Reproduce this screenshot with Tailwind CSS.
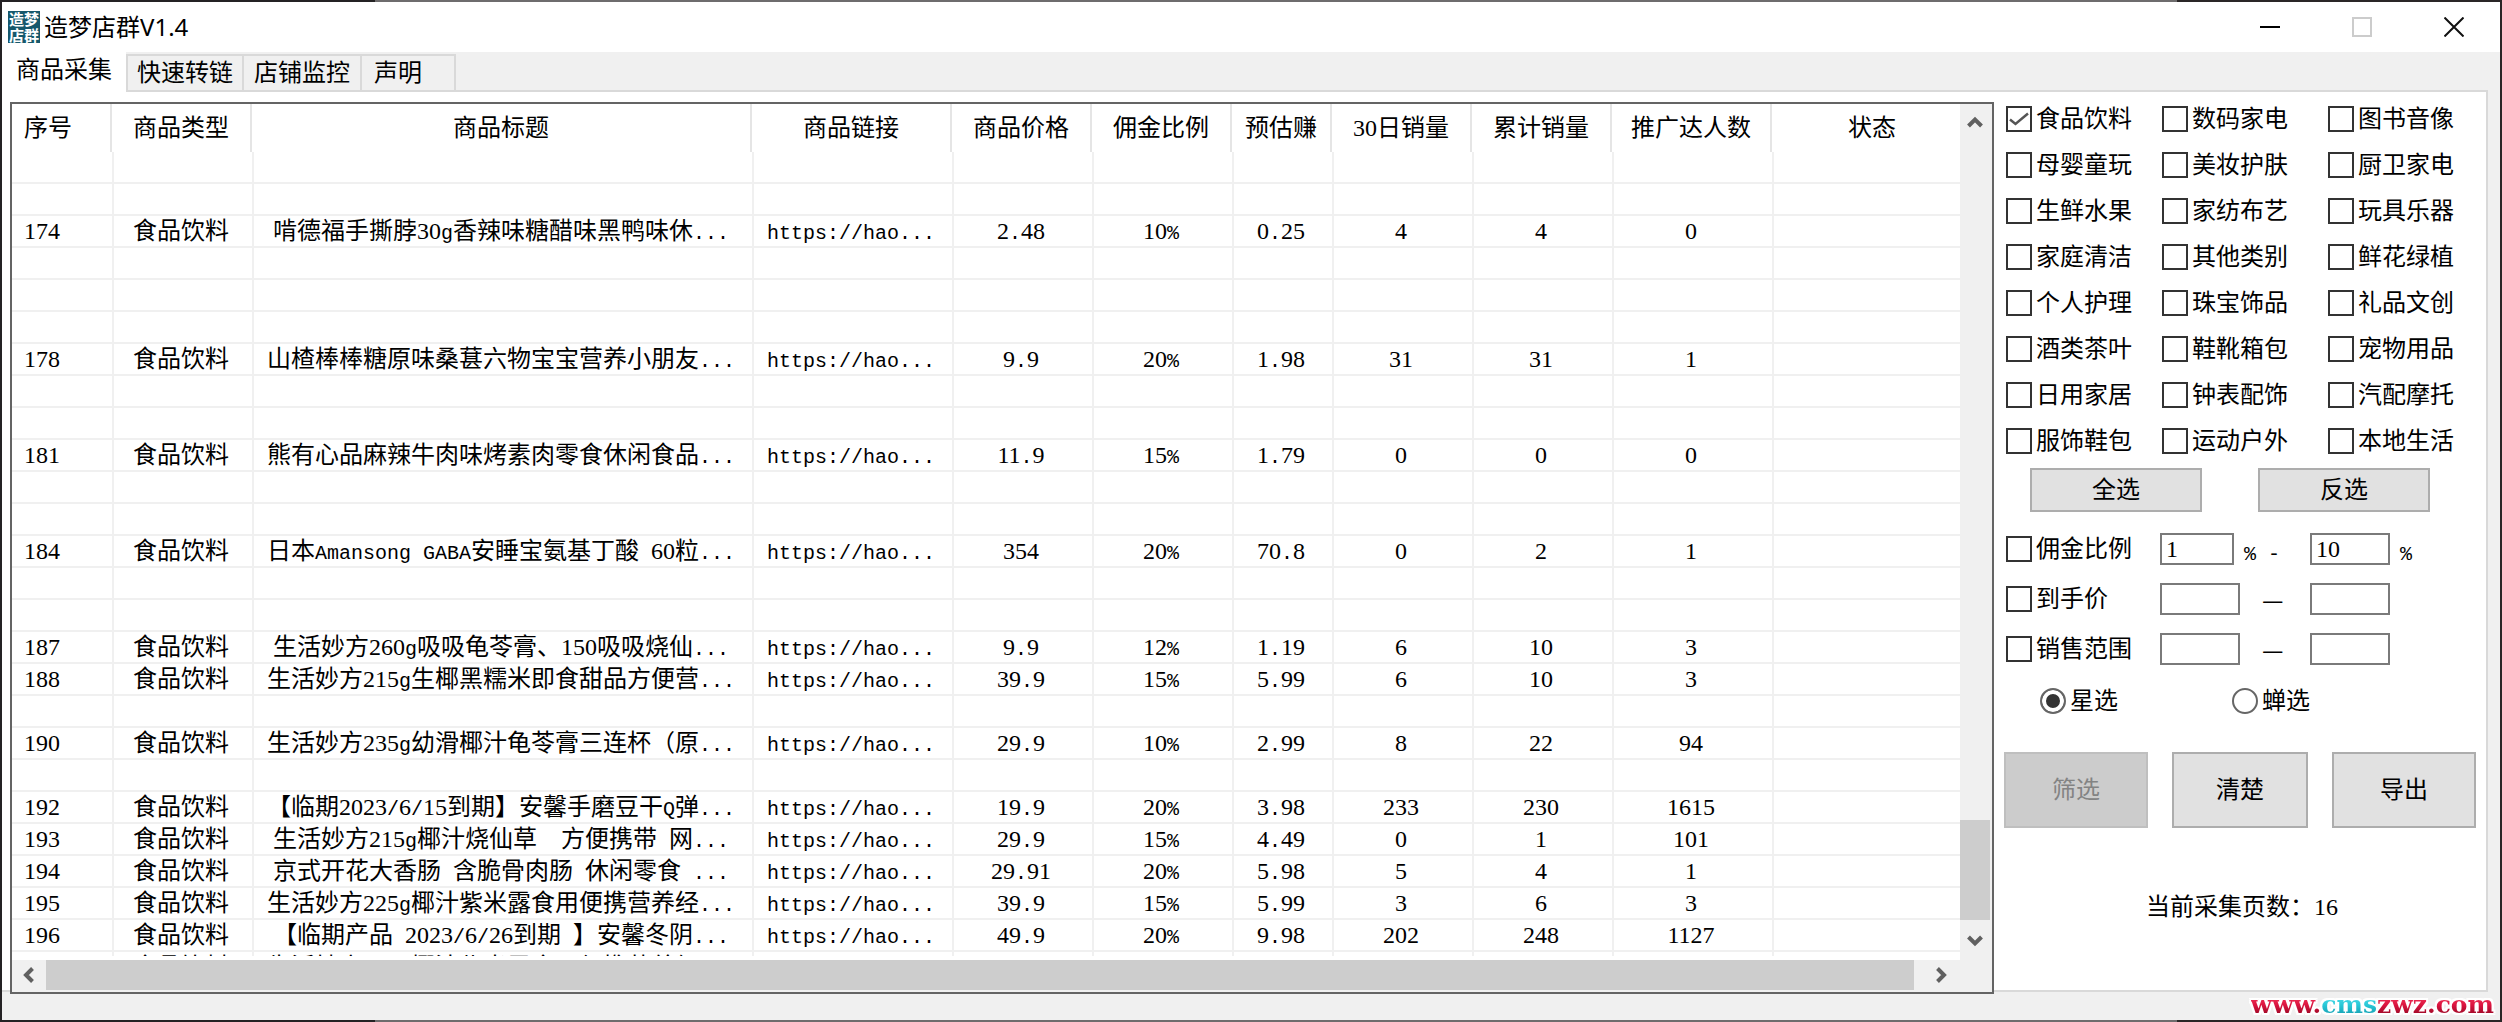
<!DOCTYPE html>
<html lang="zh-CN">

<head>
    <meta charset="UTF-8">
    <meta name="viewport" content="width=device-width, initial-scale=1.0">
    <title>造梦店群V1.4</title>
    <script src="https://cdn.jsdelivr.net/npm/@tailwindcss/browser@4"></script>
</head>

<body class="h-screen p-[2px] overflow-hidden bg-[linear-gradient(90deg,#242224_15%,#6e6c6d_15%,#6e6c6d_87%,#2a2627_87%)] font-['Liberation_Serif','Noto_Sans_CJK_SC',serif] text-2xl leading-[30px] text-black">
    <div class="h-full flex flex-col bg-[#f0f0f0]">
        <!-- Title bar -->
        <header class="flex items-center h-[50px] shrink-0 bg-white pl-[6px]">
            <div class="size-8 bg-[#16586c] text-white text-[15px] leading-4 font-bold text-center font-['Noto_Sans_CJK_SC',sans-serif]">造梦店群</div>
            <h1 class="ml-1 flex-1 font-['Noto_Sans','Noto_Sans_CJK_SC',sans-serif]">造梦店群V1.4</h1>
            <button aria-label="最小化" class="w-[92px] h-full flex items-center justify-center">
                <svg width="20" height="20" viewBox="0 0 20 20"><path d="M0 10H20" stroke="#000" stroke-width="2" /></svg>
            </button>
            <button aria-label="最大化" class="w-[92px] h-full flex items-center justify-center" disabled>
                <svg width="20" height="20" viewBox="0 0 20 20"><rect x="1" y="1" width="18" height="18" fill="none" stroke="#ccc" stroke-width="2" /></svg>
            </button>
            <button aria-label="关闭" class="w-[92px] h-full flex items-center justify-center">
                <svg width="20" height="20" viewBox="0 0 20 20"><path d="M0.5 0.5L19.5 19.5M19.5 0.5L0.5 19.5" stroke="#111" stroke-width="2" /></svg>
            </button>
        </header>

        <!-- Tabs -->
        <nav class="flex h-10 shrink-0">
            <button class="w-[124px] bg-white pb-1">商品采集</button>
            <div class="flex flex-1 border-b-2 border-[#d9d9d9] mr-3 pt-[2px]">
                <button class="w-[118px] border-2 border-b-0 border-[#d9d9d9]">快速转链</button>
                <button class="w-[118px] border-2 border-b-0 border-l-0 border-[#d9d9d9]">店铺监控</button>
                <button class="w-[94px] border-2 border-b-0 border-l-0 border-[#d9d9d9] text-left pl-3">声明</button>
            </div>
        </nav>

        <main class="flex flex-1 min-h-0 mr-3 mb-7 bg-white border-r-2 border-b-2 border-[#d9d9d9]">
            <!-- Goods list -->
            <section class="flex flex-col flex-1 min-w-0 mt-[10px] ml-2 -mb-1 border-2 border-[#646464] bg-white relative">
                <div class="flex flex-1 min-h-0">
                    <div class="flex-1 min-w-0 mb-1 overflow-hidden">
                        <table class="w-full table-fixed border-separate border-spacing-0 whitespace-nowrap text-center">
                            <colgroup>
                                <col class="w-[100px]">
                                <col class="w-[140px]">
                                <col class="w-[500px]">
                                <col class="w-[200px]">
                                <col class="w-[140px]">
                                <col class="w-[140px]">
                                <col class="w-[100px]">
                                <col class="w-[140px]">
                                <col class="w-[140px]">
                                <col class="w-[160px]">
                                <col>
                            </colgroup>
                            <thead>
                                <tr class="h-12 [&>th]:font-normal [&>th]:p-0 [&>th]:border-r-2 [&>th]:border-[#e5e5e5] [&>th:last-child]:border-r-0 [&>th:last-child]:pl-3">
                                    <th class="text-left"><span class="pl-3">序号</span></th>
                                    <th>商品类型</th>
                                    <th>商品标题</th>
                                    <th>商品链接</th>
                                    <th>商品价格</th>
                                    <th>佣金比例</th>
                                    <th>预估赚</th>
                                    <th>30日销量</th>
                                    <th>累计销量</th>
                                    <th>推广达人数</th>
                                    <th>状态</th>
                                </tr>
                            </thead>
                            <tbody id="goods"></tbody>
                        </table>
                    </div>
                    <div class="flex flex-col w-8 bg-[#f0f0f0] pr-[2px]">
                        <button aria-label="向上滚动" class="h-9 flex items-center justify-center">
                            <svg width="16" height="14" viewBox="0 0 16 14"><path d="M1.500 11L8 4.500L14.500 11" fill="none" stroke="#606060" stroke-width="4" /></svg>
                        </button>
                        <div class="flex-1"></div>
                        <div class="h-[100px] bg-[#cdcdcd]"></div>
                        <button aria-label="向下滚动" class="h-10 flex items-center justify-center">
                            <svg width="16" height="14" viewBox="0 0 16 14"><path d="M1.500 4L8 10.500L14.500 4" fill="none" stroke="#606060" stroke-width="4" /></svg>
                        </button>
                    </div>
                </div>
                <div class="flex h-8 shrink-0 bg-[#f0f0f0] pb-[2px] pr-8">
                    <button aria-label="向左滚动" class="w-[34px] flex items-center justify-center">
                        <svg width="14" height="16" viewBox="0 0 14 16"><path d="M10.500 1.500L4 8L10.500 14.500" fill="none" stroke="#606060" stroke-width="4" /></svg>
                    </button>
                    <div class="flex-1 bg-[#cdcdcd]"></div>
                    <button aria-label="向右滚动" class="w-[46px] flex items-center justify-center pl-2">
                        <svg width="14" height="16" viewBox="0 0 14 16"><path d="M3.500 1.500L10 8L3.500 14.500" fill="none" stroke="#606060" stroke-width="4" /></svg>
                    </button>
                </div>
            </section>

            <!-- Filters -->
            <aside class="w-[492px] shrink-0 pl-3 pt-1">
                <div id="categories" class="grid grid-cols-[156px_166px_1fr] auto-rows-[46px] items-center"></div>

                <div class="flex pl-6 pt-1 gap-14">
                    <button class="w-[172px] h-11 bg-[#e1e1e1] border-2 border-[#adadad]">全选</button>
                    <button class="w-[172px] h-11 bg-[#e1e1e1] border-2 border-[#adadad]">反选</button>
                </div>

                <div class="grid grid-cols-[154px_150px_1fr] auto-rows-[50px] items-center pt-3">
                    <label class="flex items-center gap-1"><input type="checkbox" class="appearance-none size-[26px] border-2 border-[#333]">佣金比例</label>
                    <div class="flex items-end">
                        <input type="text" value="1" aria-label="最低佣金比例" class="w-[74px] h-8 border-2 border-[#7a7a7a] pl-1 leading-none">
                        <span class="ml-[10px] font-['Liberation_Mono',monospace] text-xl leading-none whitespace-pre">% -</span>
                    </div>
                    <div class="flex items-end">
                        <input type="text" value="10" aria-label="最高佣金比例" class="w-20 h-8 border-2 border-[#7a7a7a] pl-1 leading-none">
                        <span class="ml-[10px] font-['Liberation_Mono',monospace] text-xl leading-none">%</span>
                    </div>

                    <label class="flex items-center gap-1"><input type="checkbox" class="appearance-none size-[26px] border-2 border-[#333]">到手价</label>
                    <div class="flex items-center">
                        <input type="text" aria-label="最低到手价" class="w-20 h-8 border-2 border-[#7a7a7a] pl-1">
                        <span class="ml-[22px] font-['Noto_Sans_CJK_SC',sans-serif]">—</span>
                    </div>
                    <input type="text" aria-label="最高到手价" class="w-20 h-8 border-2 border-[#7a7a7a] pl-1">

                    <label class="flex items-center gap-1"><input type="checkbox" class="appearance-none size-[26px] border-2 border-[#333]">销售范围</label>
                    <div class="flex items-center">
                        <input type="text" aria-label="最低销售" class="w-20 h-8 border-2 border-[#7a7a7a] pl-1">
                        <span class="ml-[22px] font-['Noto_Sans_CJK_SC',sans-serif]">—</span>
                    </div>
                    <input type="text" aria-label="最高销售" class="w-20 h-8 border-2 border-[#7a7a7a] pl-1">
                </div>

                <div class="grid grid-cols-[192px_1fr] pl-[34px] pt-3">
                    <label class="flex items-center gap-1"><input type="radio" name="source" checked class="appearance-none size-[26px] rounded-full border-2 border-[#666] checked:bg-[#333] shadow-[inset_0_0_0_4px_#fff]">星选</label>
                    <label class="flex items-center gap-1"><input type="radio" name="source" class="appearance-none size-[26px] rounded-full border-2 border-[#666]">蝉选</label>
                </div>

                <div class="flex justify-between h-[76px] mt-9 -ml-[2px] mr-[10px]">
                    <button disabled class="w-36 bg-[#ccc] border-2 border-[#bfbfbf] text-[#838383]">筛选</button>
                    <button class="w-[136px] bg-[#e1e1e1] border-2 border-[#adadad]">清楚</button>
                    <button class="w-36 bg-[#e1e1e1] border-2 border-[#adadad]">导出</button>
                </div>

                <p class="pl-[140px] pt-16">当前采集页数：16</p>
            </aside>
        </main>
    </div>

    <!-- Site mark -->
    <a href="#" class="absolute right-2 bottom-[2px] flex font-['DejaVu_Serif',serif] text-[25px] font-bold text-transparent [filter:drop-shadow(2px_0_#fff)_drop-shadow(-2px_0_#fff)_drop-shadow(0_2px_#fff)_drop-shadow(0_-2px_#fff)]">
        <span class="bg-clip-text bg-linear-to-b from-[#ff4068] via-[#dc1440] to-[#7a0418]">www.</span>
        <span class="bg-clip-text bg-linear-to-b from-[#5cecf4] via-[#28c8d8] to-[#0c8ca0]">cms</span>
        <span class="bg-clip-text bg-linear-to-b from-[#ff4068] via-[#dc1440] to-[#7a0418]">zwz.com</span>
    </a>

    <script>
        const categories = [
            '食品饮料', '数码家电', '图书音像',
            '母婴童玩', '美妆护肤', '厨卫家电',
            '生鲜水果', '家纺布艺', '玩具乐器',
            '家庭清洁', '其他类别', '鲜花绿植',
            '个人护理', '珠宝饰品', '礼品文创',
            '酒类茶叶', '鞋靴箱包', '宠物用品',
            '日用家居', '钟表配饰', '汽配摩托',
            '服饰鞋包', '运动户外', '本地生活'
        ];

        // title, price, rate, profit, 30-day sales, total sales, promoters
        const goods = {
            174: ['啃德福手撕脖30g香辣味糖醋味黑鸭味休...', '2.48', '10%', '0.25', '4', '4', '0'],
            178: ['山楂棒棒糖原味桑葚六物宝宝营养小朋友...', '9.9', '20%', '1.98', '31', '31', '1'],
            181: ['熊有心品麻辣牛肉味烤素肉零食休闲食品...', '11.9', '15%', '1.79', '0', '0', '0'],
            184: ['日本Amansong GABA安睡宝氨基丁酸 60粒...', '354', '20%', '70.8', '0', '2', '1'],
            187: ['生活妙方260g吸吸龟苓膏、150吸吸烧仙...', '9.9', '12%', '1.19', '6', '10', '3'],
            188: ['生活妙方215g生椰黑糯米即食甜品方便营...', '39.9', '15%', '5.99', '6', '10', '3'],
            190: ['生活妙方235g幼滑椰汁龟苓膏三连杯（原...', '29.9', '10%', '2.99', '8', '22', '94'],
            192: ['【临期2023/6/15到期】安馨手磨豆干Q弹...', '19.9', '20%', '3.98', '233', '230', '1615'],
            193: ['生活妙方215g椰汁烧仙草　方便携带 网...', '29.9', '15%', '4.49', '0', '1', '101'],
            194: ['京式开花大香肠 含脆骨肉肠 休闲零食 ...', '29.91', '20%', '5.98', '5', '4', '1'],
            195: ['生活妙方225g椰汁紫米露食用便携营养经...', '39.9', '15%', '5.99', '3', '6', '3'],
            196: ['【临期产品 2023/6/26到期 】安馨冬阴...', '49.9', '20%', '9.98', '202', '248', '1127'],
            197: ['生活妙方225g椰汁紫米露食用便携营养经...', '39.9', '15%', '5.99', '3', '6', '3']
        };

        // Latin letters and punctuation take half the width of a Chinese character
        function halfWidth(text) {
            return text.replace(/[\x20-\x2f\x3a-\x7e]+/g, run =>
                `<span class="font-['Liberation_Mono',monospace] text-xl leading-none whitespace-pre">${run}</span>`);
        }

        document.getElementById('categories').innerHTML = categories.map((name, i) => `
            <label class="flex items-center gap-1">
                <span class="grid">
                    <input type="checkbox" ${i === 0 ? 'checked' : ''} class="peer appearance-none size-[26px] border-2 border-[#333] col-start-1 row-start-1">
                    <svg class="hidden peer-checked:block col-start-1 row-start-1 pointer-events-none" width="26" height="26" viewBox="0 0 26 26"><path d="M4 13.500L9.500 18L22 7.500" fill="none" stroke="#555" stroke-width="2.500" /></svg>
                </span>${name}
            </label>`).join('');

        let rows = '';
        for (let no = 172; no <= 197; no++) {
            const item = goods[no];
            const cells = item
                ? [String(no), '食品饮料', item[0], 'https://hao...', ...item.slice(1), '']
                : Array(11).fill('');
            rows += `<tr class="h-8 [&>td]:p-0 [&>td]:pr-1 [&>td]:h-8 [&>td]:leading-[30px] [&>td]:border-b-2 [&>td]:border-l-2 [&>td]:border-[#f0f0f0] [&>td:first-child]:border-l-0 [&>td:first-child]:pl-3 [&>td:first-child]:text-left">
                ${cells.map(cell => `<td>${halfWidth(cell)}</td>`).join('')}
            </tr>`;
        }
        document.getElementById('goods').innerHTML = rows;
    </script>
</body>

</html>
